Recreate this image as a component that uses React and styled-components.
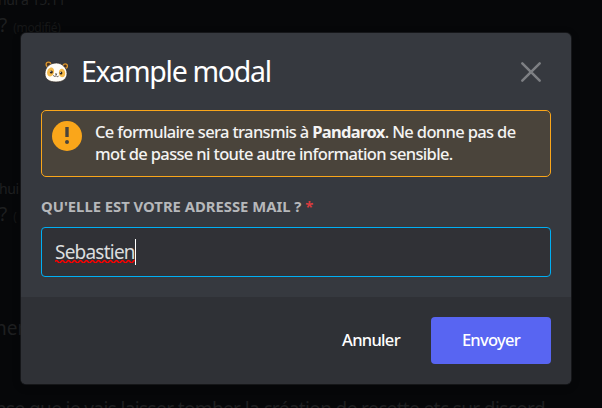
import React from "react";
import styled, { createGlobalStyle } from "styled-components";

const GlobalStyle = createGlobalStyle`
  * { box-sizing: border-box; }
  body { margin: 0; background: #060709; font-family: "Noto Sans", sans-serif; }
`;

const Screen = styled.div`
  position: relative;
  width: 602px;
  height: 408px;
  overflow: hidden;
  background: #060709;
`;

const Chat = styled.div`
  display: flex;
  flex-direction: column;
  height: 420px;
  color: #1e1f20;
  white-space: nowrap;
`;

const ChatLine = styled.div`
  height: 24px;
  line-height: 24px;
  font-size: ${(p) => (p.$small ? 14 : 19)}px;
  margin-top: ${(p) => p.$gap}px;
  margin-left: ${(p) => p.$shift || 0}px;
  letter-spacing: ${(p) => p.$track || 0}px;
  flex: none;
`;

const Edited = styled.span`
  font-size: 12px;
  letter-spacing: -0.3px;
  margin-left: 1px;
  color: #161718;
`;

const Modal = styled.section`
  position: absolute;
  left: 21px;
  top: 33px;
  width: 550px;
  height: 351px;
  display: flex;
  flex-direction: column;
  overflow: hidden;
  border-radius: 5px;
  background: #36393f;
  box-shadow: 0 0 0 1px rgba(32, 34, 37, 0.6), 0 2px 10px rgba(0, 0, 0, 0.2);
`;

const Header = styled.header`
  display: flex;
  align-items: center;
  height: 77px;
  padding: 0 29px 0 22px;
`;

const Title = styled.h1`
  margin: -2px auto 0 11px;
  font-size: 28.5px;
  font-weight: 400;
  line-height: 36px;
  letter-spacing: -1.3px;
  color: #fff;
`;

const CloseButton = styled.button`
  display: flex;
  padding: 0;
  border: 0;
  background: none;
  color: #7d7f83;
  margin-top: 1px;
`;

const Notice = styled.div`
  display: flex;
  height: 67px;
  margin: 0 20px;
  padding: 10px;
  border: 1px solid #faa61a;
  border-radius: 5px;
  background: #4a443b;
`;

const NoticeText = styled.p`
  margin: 0 0 0 13px;
  font-size: 16.5px;
  font-weight: 500;
  line-height: 22px;
  color: #f4f3f2;
  white-space: nowrap;
`;

const TextLine = styled.span`
  display: block;
  letter-spacing: ${(p) => p.$track}px;
`;

const Label = styled.label`
  margin: 20px 20px 0;
  height: 20px;
  font-size: 14.8px;
  font-weight: 700;
  line-height: 19px;
  color: #b6b8bb;
`;

const Required = styled.span`
  color: #d83c3e;
`;

const Field = styled.div`
  display: flex;
  align-items: center;
  height: 50px;
  margin: 10px 20px 0;
  padding: 0 13px;
  border: 1px solid #00aff4;
  border-radius: 4px;
  background: #303136;
`;

const Value = styled.span`
  position: relative;
  font-size: 19px;
  line-height: 26px;
  letter-spacing: -0.78px;
  color: #dcddde;
`;

const Squiggle = styled.svg`
  position: absolute;
  left: 0;
  top: 20px;
`;

const Caret = styled.span`
  width: 1px;
  height: 26px;
  background: #fff;
`;

const Footer = styled.footer`
  display: flex;
  justify-content: flex-end;
  height: 87px;
  margin-top: 20px;
  padding: 20px;
  background: #2f3136;
`;

const Button = styled.button`
  width: 120px;
  height: 47px;
  padding: 0 0 1px;
  border: 0;
  border-radius: 4px;
  background: ${(p) => (p.$primary ? "#5865f2" : "transparent")};
  color: #fff;
  font: 500 16.5px/22px "Noto Sans", sans-serif;
  letter-spacing: ${(p) => p.$track}px;
`;

const Panda = () => (
  <svg width="27" height="24" viewBox="0 0 27 24">
    <g fill="#4b3320" stroke="#d9942c" strokeWidth="1.3">
      <circle cx="5.5" cy="4.5" r="2.4" />
      <circle cx="22.2" cy="6" r="2.2" />
    </g>
    <path d="M13.4 3C19 3 24 8 24 13.5c0 5.2-4 8.5-11 8.5S1.8 19 2 13.5C2.2 7 7 3 13.4 3Z" fill="#fffdf7" stroke="#302a25" strokeWidth=".7" />
    <path d="M4.1 13c-.1-4 3.1-6.4 5.3-5.3 2.6 1.3 2 6.3-.4 8.1-2.2 1.5-4.8.3-4.9-2.8Z" fill="#f5ba4b" />
    <path d="M22 15c1-4-1.4-6.7-3.8-6.2-2.6.6-3.1 5.5-1.1 7.5 1.9 1.6 4.2 1.1 4.9-1.3Z" fill="#f5ba4b" />
    <ellipse cx="8.3" cy="12" rx="1.5" ry="1.6" fill="#29231f" />
    <ellipse cx="18" cy="12.9" rx="1.4" ry="1.5" fill="#29231f" />
    <circle cx="7.8" cy="11.4" r=".5" fill="#fff" />
    <circle cx="17.5" cy="12.3" r=".5" fill="#fff" />
    <path d="m11.8 13.4 2.5.3-1.2 1.6Z" fill="#29231f" />
    <path d="M10.2 15.4c1.1 1.3 2.1 1.2 2.9.2.7 1.2 1.6 1.3 2.5.5" fill="none" stroke="#332b26" strokeWidth=".8" />
  </svg>
);

export default function App() {
  return (
    <Screen>
      <GlobalStyle />
      <Chat>
        <ChatLine $small $gap={-12} $shift={-2} $track={-0.4}>hui à 15:11</ChatLine>
        <ChatLine $gap={1} $shift={-1}>? <Edited>(modifié)</Edited></ChatLine>
        <ChatLine $small $gap={140} $shift={-1} $track={-0.4}>hui</ChatLine>
        <ChatLine $gap={1} $shift={-1}>? <Edited>(</Edited></ChatLine>
        <ChatLine $gap={90} $shift={-5}>ner</ChatLine>
        <ChatLine $gap={57} $shift={-5} $track={-0.62}>nse que je vais laisser tomber la création de recette etc sur discord</ChatLine>
      </Chat>
      <Modal role="dialog" aria-label="Example modal">
        <Header>
          <Panda />
          <Title>Example modal</Title>
          <CloseButton aria-label="Fermer">
            <svg width="22" height="22" viewBox="0 0 22 22" fill="none" stroke="currentColor" strokeWidth="2.5" strokeLinecap="round">
              <path d="M2.3 2.3l17.4 17.4M19.7 2.3L2.3 19.7" />
            </svg>
          </CloseButton>
        </Header>
        <Notice>
          <svg width="30" height="30" viewBox="0 0 30 30">
            <circle cx="15" cy="15" r="15" fill="#faa61a" />
            <path d="M13.3 6h3.4v10h-3.4z" fill="#4a443b" />
            <circle cx="15" cy="21" r="2" fill="#4a443b" />
          </svg>
          <NoticeText>
            <TextLine $track={-0.65}>Ce formulaire sera transmis à <b>Pandarox</b>. Ne donne pas de</TextLine>
            <TextLine $track={-0.65}>mot de passe ni toute autre information sensible.</TextLine>
          </NoticeText>
        </Notice>
        <Label>QU'ELLE EST VOTRE ADRESSE MAIL ? <Required>*</Required></Label>
        <Field>
          <Value>
            Sebastien
            <Squiggle width="80" height="4" viewBox="0 0 80 4">
              <path d={"M0 2.7" + "q1.5-2.6 3 0t3 0".repeat(14)} fill="none" stroke="#f00" strokeWidth="1.5" />
            </Squiggle>
          </Value>
          <Caret />
        </Field>
        <Footer>
          <Button $track={-0.7}>Annuler</Button>
          <Button $primary $track={-0.7}>Envoyer</Button>
        </Footer>
      </Modal>
    </Screen>
  );
}
